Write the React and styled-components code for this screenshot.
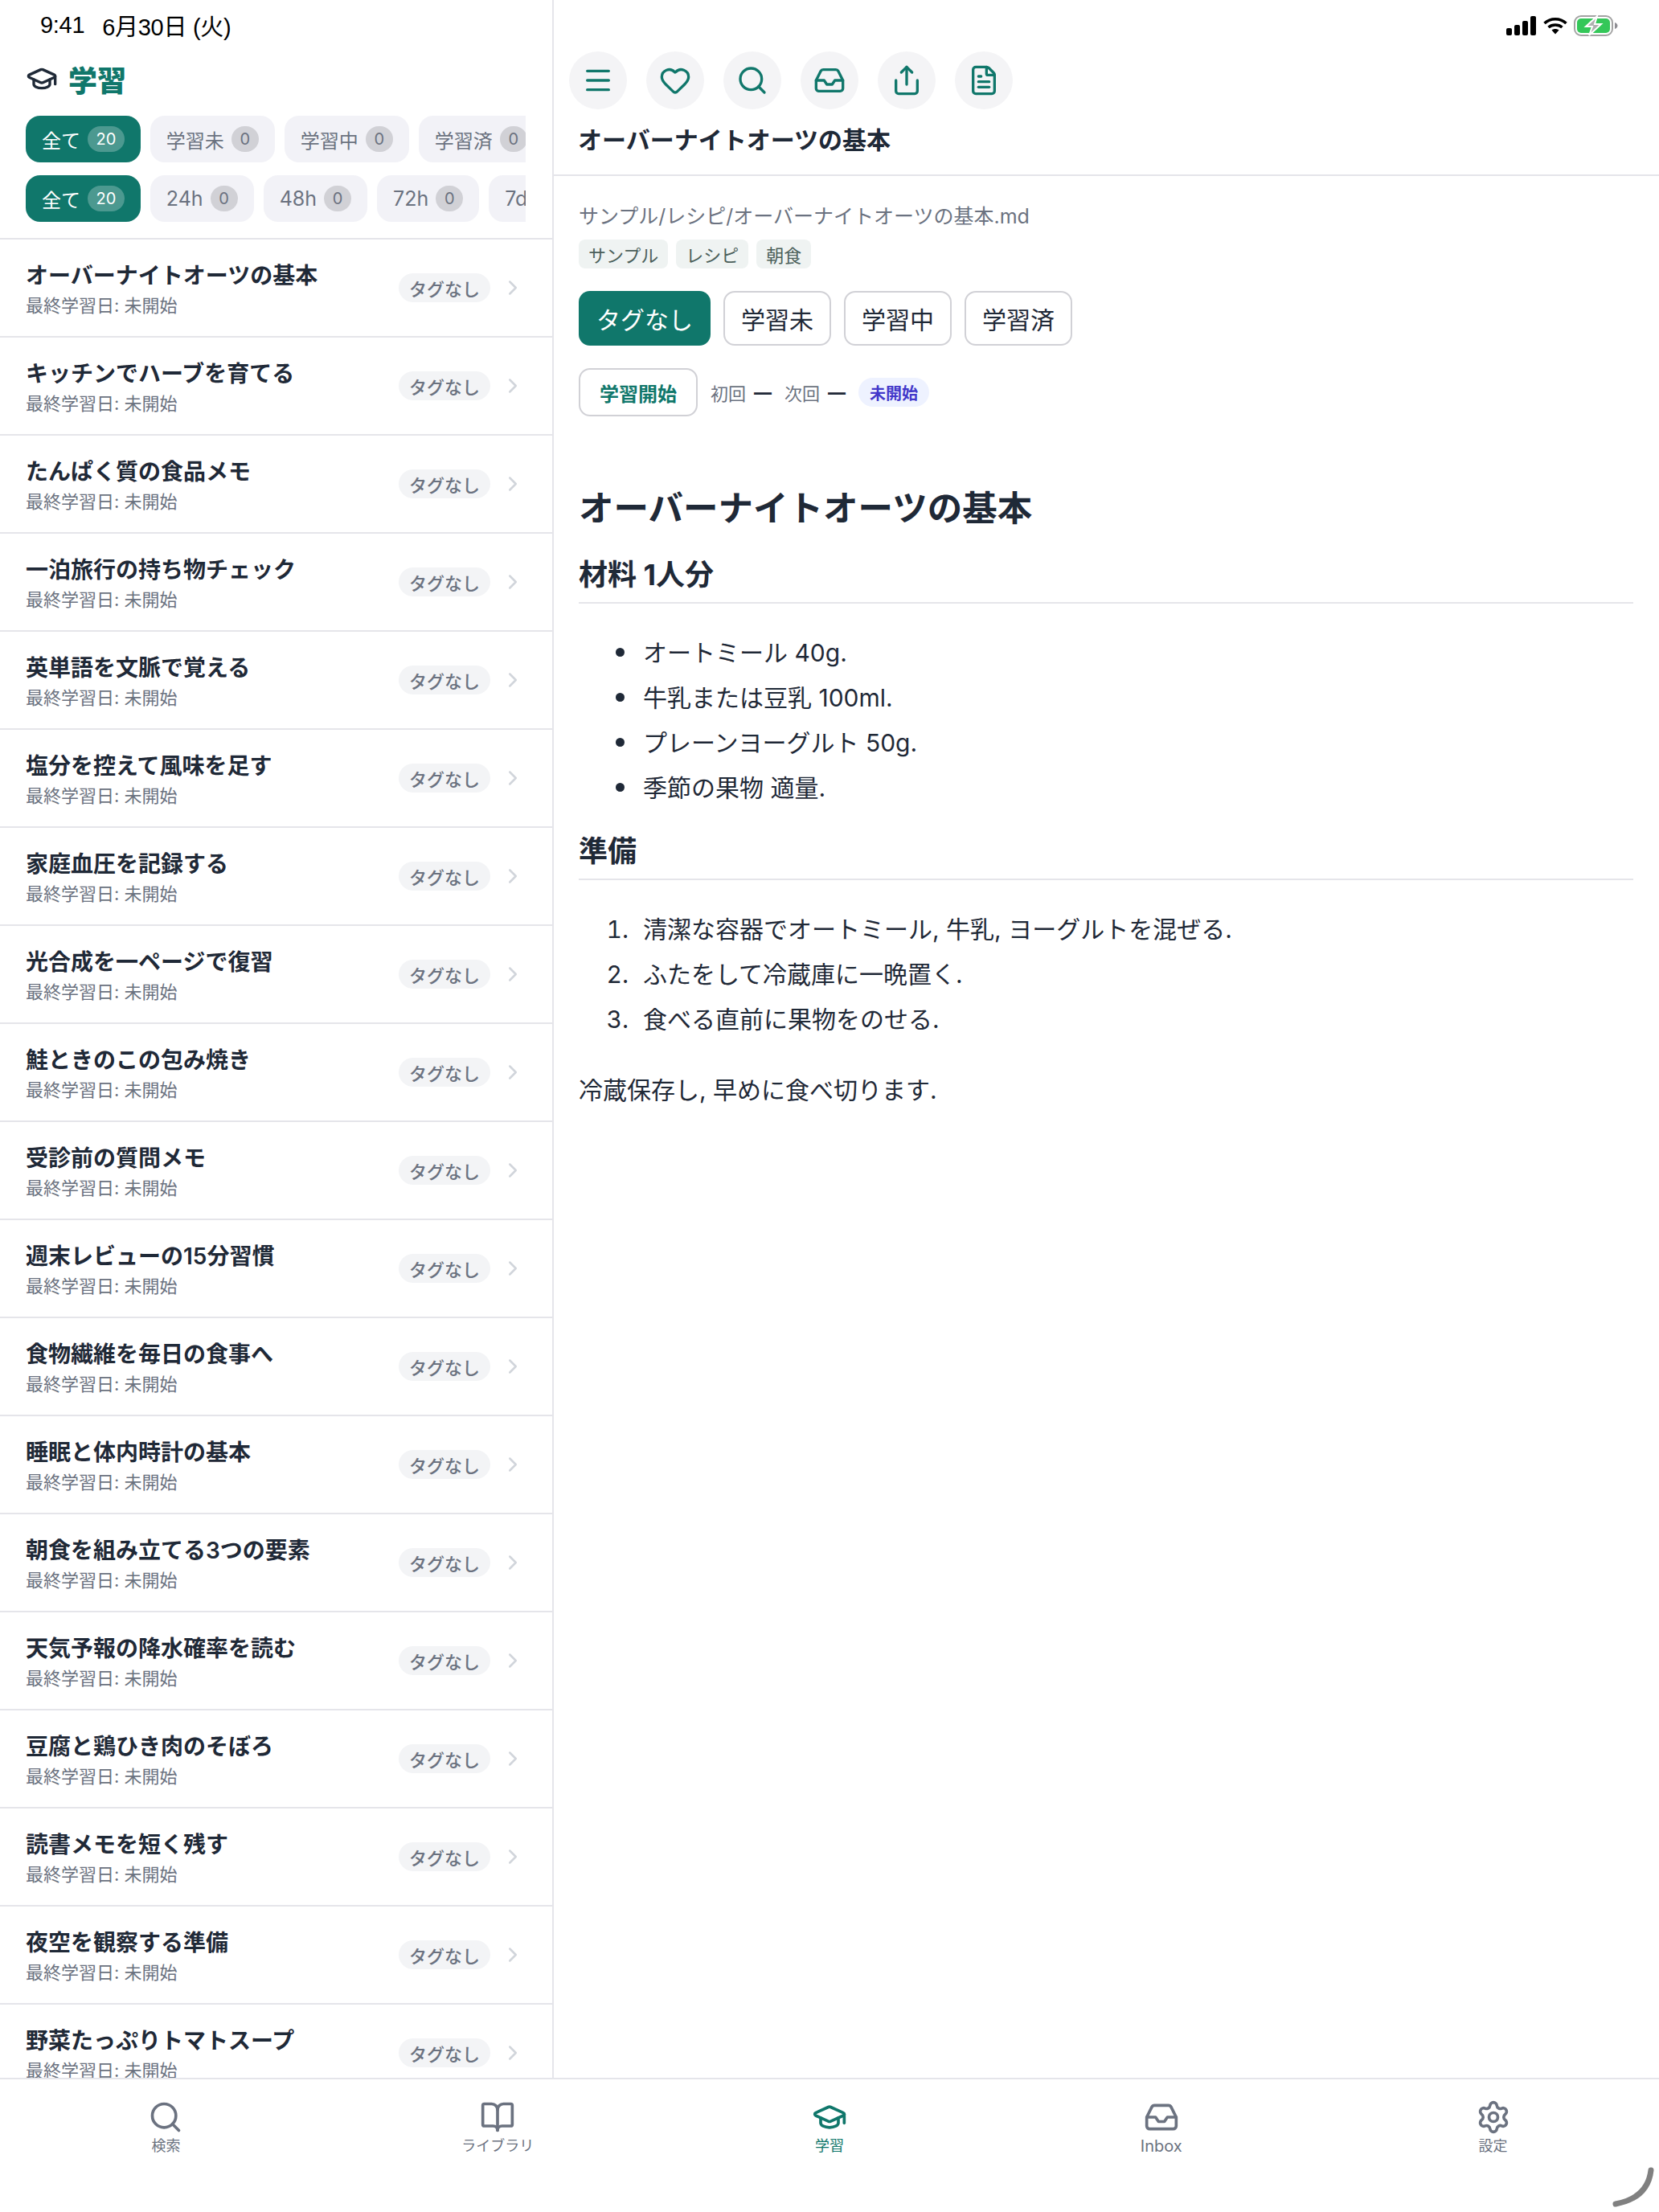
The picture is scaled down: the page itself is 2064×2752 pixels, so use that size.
import styled, { createGlobalStyle } from "styled-components";
import { BookOpen, ChevronRight, FileText, GraduationCap, Heart, Inbox, Menu, Search, Settings, Share } from "lucide-react";

const GlobalStyle = createGlobalStyle`
  html, body {
    margin: 0;
    padding: 0;
    background: #fff;
  }
  * {
    box-sizing: border-box;
  }
  body {
    font-family: Inter, "Noto Sans CJK JP", sans-serif;
    color: #1f2937;
  }
`;

const Page = styled.div`
  position: relative;
  width: 2064px;
  height: 2752px;
  display: flex;
  flex-direction: column;
  overflow: hidden;
`;
const Main = styled.div`
  flex: 1;
  min-height: 0;
  display: flex;
`;
const Sidebar = styled.aside`
  width: 689px;
  display: flex;
  flex-direction: column;
  border-right: 2px solid #e5e5ea;
`;
const StatusTime = styled.div`
  height: 62px;
  padding-left: 50px;
  display: flex;
  align-items: center;
  gap: 22px;
  font-family: "Liberation Sans", "Noto Sans CJK JP", sans-serif;
  font-size: 29px;
  letter-spacing: -0.3px;
  color: #000;
`;
const SideHeader = styled.div`
  height: 72px;
  margin-bottom: 10px;
  padding-left: 32px;
  display: flex;
  align-items: center;
  gap: 13px;
  color: #1f2937;
`;
const SideTitle = styled.h1`
  margin: 0;
  font-size: 36px;
  font-weight: 900;
  color: #10776b;
`;
const FilterRow = styled.div`
  margin: 0 33px 16px 32px;
  display: flex;
  gap: 12px;
  overflow: hidden;
`;
const Chip = styled.div`
  flex-shrink: 0;
  height: 58px;
  padding: 0 20px;
  display: flex;
  align-items: center;
  gap: 9px;
  border-radius: 18px;
  font-size: ${(p) => (p.$latin ? "25px" : "24px")};
  background: ${(p) => (p.$active ? "#10776b" : "#f2f2f7")};
  color: ${(p) => (p.$active ? "#fff" : "#6b7280")};
`;
const ChipCount = styled.span`
  min-width: 34px;
  height: 32px;
  padding: 0 10.5px;
  display: flex;
  align-items: center;
  justify-content: center;
  border-radius: 16px;
  font-size: 20px;
  background: ${(p) => (p.$active ? "rgba(255,255,255,0.25)" : "#d1d1d6")};
  color: ${(p) => (p.$active ? "#fff" : "#6b7280")};
`;
const List = styled.div`
  flex: 1;
  min-height: 0;
  margin-top: 4px;
  overflow: hidden;
  border-top: 2px solid #e5e5ea;
`;
const Row = styled.div`
  height: 122px;
  padding: 0 34px 0 32px;
  display: flex;
  align-items: center;
  border-bottom: 2px solid #e5e5ea;
`;
const RowText = styled.div`
  flex: 1;
  min-width: 0;
  padding-top: 2px;
`;
const RowTitle = styled.div`
  font-size: 28px;
  line-height: 40px;
  font-weight: 600;
  color: #1f2937;
`;
const RowSub = styled.div`
  font-size: 22px;
  line-height: 32px;
  margin-top: 1px;
  color: #6b7280;
`;
const Pill = styled.span`
  width: 114px;
  height: 36px;
  margin-right: 13px;
  display: flex;
  align-items: center;
  justify-content: center;
  border-radius: 18px;
  background: #f3f4f6;
  color: #6b7280;
  font-size: 22px;
  font-weight: 500;
`;
const Chevron = styled(ChevronRight)`
  color: #d1d5db;
`;
const Detail = styled.section`
  flex: 1;
  min-width: 0;
  display: flex;
  flex-direction: column;
`;
const StatusIcons = styled.div`
  height: 64px;
  padding-right: 50px;
  display: flex;
  align-items: center;
  justify-content: flex-end;
  gap: 8px;
`;
const Toolbar = styled.div`
  padding-left: 19px;
  display: flex;
  gap: 24px;
`;
const RoundButton = styled.button`
  width: 72px;
  height: 72px;
  padding: 0;
  border: none;
  border-radius: 50%;
  display: flex;
  align-items: center;
  justify-content: center;
  background: #f4f4f6;
  color: #10776b;
`;
const DocTitle = styled.h2`
  margin: 0;
  height: 83px;
  padding: 16px 0 0 30px;
  font-size: 30px;
  line-height: 44px;
  font-weight: 700;
  color: #1f2937;
  border-bottom: 2px solid #e5e5ea;
`;
const DocBody = styled.div`
  padding: 32px 32px 0 31px;
`;
const PathText = styled.div`
  font-size: 25px;
  line-height: 36px;
  color: #6b7280;
`;
const TagRow = styled.div`
  margin-top: 11px;
  display: flex;
  gap: 10px;
`;
const Tag = styled.span`
  height: 36px;
  padding: 0 12px;
  display: flex;
  align-items: center;
  border-radius: 8px;
  background: #eff3f2;
  color: #4b5f5a;
  font-size: 22px;
`;
const StatusRow = styled.div`
  margin-top: 28px;
  display: flex;
  gap: 16px;
`;
const StatusButton = styled.button`
  height: 68px;
  padding: 0 ${(p) => (p.$active ? "22px" : "20px")};
  border: ${(p) => (p.$active ? "none" : "2px solid #d1d1d6")};
  border-radius: 14px;
  background: ${(p) => (p.$active ? "#10776b" : "#fff")};
  color: ${(p) => (p.$active ? "#fff" : "#1f2937")};
  font-family: inherit;
  font-size: 30px;
`;
const ReviewRow = styled.div`
  margin-top: 28px;
  display: flex;
  align-items: center;
`;
const StartButton = styled.button`
  height: 60px;
  padding: 0 24px;
  margin-right: 16px;
  border: 2px solid #d1d1d6;
  border-radius: 14px;
  background: #fff;
  color: #10776b;
  font-family: inherit;
  font-size: 24px;
  font-weight: 600;
`;
const ReviewLabel = styled.span`
  font-size: 22px;
  color: #6b7280;
`;
const ReviewValue = styled.span`
  margin: 0 16px 0 10px;
  font-size: 22px;
  font-weight: 800;
  color: #1f2937;
`;
const StateBadge = styled.span`
  height: 36px;
  padding: 0 14px;
  display: flex;
  align-items: center;
  border-radius: 18px;
  background: #eef2ff;
  color: #4338ca;
  font-size: 20px;
  font-weight: 600;
`;
const Heading1 = styled.h1`
  margin: 82px 0 0;
  font-size: 43.5px;
  line-height: 64px;
  font-weight: 700;
`;
const Heading2 = styled.h2`
  margin: 26px 0 0;
  padding-bottom: 9px;
  font-size: 36px;
  line-height: 50px;
  font-weight: 700;
  border-bottom: 2px solid #e5e5ea;
`;
const Bullets = styled.ul`
  margin: 33px 0 0;
  padding-left: 80px;
  list-style: none;
  font-size: 30px;
  line-height: 56px;
  li {
    position: relative;
  }
  li::before {
    content: "";
    position: absolute;
    left: -34px;
    top: 22px;
    width: 11px;
    height: 11px;
    border-radius: 50%;
    background: #1f2937;
  }
`;
const Numbers = styled.ol`
  margin: 33px 0 0;
  padding-left: 70px;
  font-size: 30px;
  line-height: 56px;
  li {
    padding-left: 10px;
  }
`;
const Para = styled.p`
  margin: 32px 0 0;
  font-size: 30px;
  line-height: 56px;
`;
const TabBar = styled.nav`
  height: 167px;
  flex-shrink: 0;
  padding-top: 25px;
  display: grid;
  grid-template-columns: repeat(5, 1fr);
  align-items: start;
  border-top: 2px solid #e5e5ea;
`;
const Tab = styled.div`
  display: flex;
  flex-direction: column;
  align-items: center;
  gap: 2px;
  color: ${(p) => (p.$active ? "#10776b" : "#6b7280")};
`;
const TabLabel = styled.span`
  font-size: ${(p) => (p.$latin ? "20px" : "18px")};
  line-height: 24px;
`;
const HomeCurve = styled.svg`
  position: absolute;
  right: 6px;
  bottom: 6px;
`;

const items = [
  "オーバーナイトオーツの基本",
  "キッチンでハーブを育てる",
  "たんぱく質の食品メモ",
  "一泊旅行の持ち物チェック",
  "英単語を文脈で覚える",
  "塩分を控えて風味を足す",
  "家庭血圧を記録する",
  "光合成を一ページで復習",
  "鮭ときのこの包み焼き",
  "受診前の質問メモ",
  "週末レビューの15分習慣",
  "食物繊維を毎日の食事へ",
  "睡眠と体内時計の基本",
  "朝食を組み立てる3つの要素",
  "天気予報の降水確率を読む",
  "豆腐と鶏ひき肉のそぼろ",
  "読書メモを短く残す",
  "夜空を観察する準備",
  "野菜たっぷりトマトスープ",
];

const statusFilters = [["全て", 20], ["学習未", 0], ["学習中", 0], ["学習済", 0]];
const timeFilters = [["全て", 20], ["24h", 0], ["48h", 0], ["72h", 0], ["7d", 0]];
const tabs = [
  ["検索", Search],
  ["ライブラリ", BookOpen],
  ["学習", GraduationCap],
  ["Inbox", Inbox],
  ["設定", Settings],
];

const isLatin = (text) => /^[0-9a-zA-Z]+$/.test(text);

const Filters = ({ list }) => (
  <FilterRow>
    {list.map(([label, count], i) => (
      <Chip key={label} $active={i === 0} $latin={isLatin(label)}>
        {label}
        <ChipCount $active={i === 0}>{count}</ChipCount>
      </Chip>
    ))}
  </FilterRow>
);

const Signal = () => (
  <svg width="38" height="24" viewBox="0 0 38 24">
    <rect x="0" y="15" width="7" height="9" rx="2" fill="#000" />
    <rect x="10" y="11" width="7" height="13" rx="2" fill="#000" />
    <rect x="20" y="6" width="7" height="18" rx="2" fill="#000" />
    <rect x="30" y="0" width="7" height="24" rx="2" fill="#000" />
  </svg>
);

const Wifi = () => (
  <svg width="30" height="22" viewBox="0 0 30 22">
    <path d="M1.5 8 C9 1 21 1 28.5 8" fill="none" stroke="#000" strokeWidth="3.6" />
    <path d="M6.5 13 C11 9 19 9 23.5 13" fill="none" stroke="#000" strokeWidth="3.6" />
    <path d="M10.5 16.5 L15 21.5 L19.5 16.5 C17 14.5 13 14.5 10.5 16.5 Z" fill="#000" />
  </svg>
);

const Battery = () => (
  <svg width="56" height="28" viewBox="0 0 56 28">
    <rect x="1" y="2" width="47" height="24" rx="8" fill="none" stroke="#a3a3a3" strokeWidth="2" />
    <rect x="4" y="5" width="41" height="18" rx="5" fill="#34c759" />
    <path d="M51 10 C53.5 11 54.5 12.5 54.5 14 C54.5 15.5 53.5 17 51 18 Z" fill="#8e8e93" />
    <path d="M29 2 L15 15 H23 L19 26 L34 12 H26 Z" fill="#b0b0b0" stroke="#fff" strokeWidth="2" />
  </svg>
);

const App = () => {
  return (
    <Page>
      <GlobalStyle />
      <Main>
        <Sidebar>
          <StatusTime>
            <span>9:41</span>
            <span>6月30日 (火)</span>
          </StatusTime>
          <SideHeader>
            <GraduationCap size={40} />
            <SideTitle>学習</SideTitle>
          </SideHeader>
          <Filters list={statusFilters} />
          <Filters list={timeFilters} />
          <List>
            {items.map((title) => (
              <Row key={title}>
                <RowText>
                  <RowTitle>{title}</RowTitle>
                  <RowSub>最終学習日: 未開始</RowSub>
                </RowText>
                <Pill>タグなし</Pill>
                <Chevron size={30} />
              </Row>
            ))}
          </List>
        </Sidebar>
        <Detail>
          <StatusIcons>
            <Signal />
            <Wifi />
            <Battery />
          </StatusIcons>
          <Toolbar>
            <RoundButton><Menu size={40} /></RoundButton>
            <RoundButton><Heart size={40} /></RoundButton>
            <RoundButton><Search size={40} /></RoundButton>
            <RoundButton><Inbox size={40} /></RoundButton>
            <RoundButton><Share size={40} /></RoundButton>
            <RoundButton><FileText size={40} /></RoundButton>
          </Toolbar>
          <DocTitle>オーバーナイトオーツの基本</DocTitle>
          <DocBody>
            <PathText>サンプル/レシピ/オーバーナイトオーツの基本.md</PathText>
            <TagRow>
              <Tag>サンプル</Tag>
              <Tag>レシピ</Tag>
              <Tag>朝食</Tag>
            </TagRow>
            <StatusRow>
              <StatusButton $active>タグなし</StatusButton>
              <StatusButton>学習未</StatusButton>
              <StatusButton>学習中</StatusButton>
              <StatusButton>学習済</StatusButton>
            </StatusRow>
            <ReviewRow>
              <StartButton>学習開始</StartButton>
              <ReviewLabel>初回</ReviewLabel>
              <ReviewValue>—</ReviewValue>
              <ReviewLabel>次回</ReviewLabel>
              <ReviewValue>—</ReviewValue>
              <StateBadge>未開始</StateBadge>
            </ReviewRow>
            <Heading1>オーバーナイトオーツの基本</Heading1>
            <Heading2>材料 1人分</Heading2>
            <Bullets>
              <li>オートミール 40g.</li>
              <li>牛乳または豆乳 100ml.</li>
              <li>プレーンヨーグルト 50g.</li>
              <li>季節の果物 適量.</li>
            </Bullets>
            <Heading2>準備</Heading2>
            <Numbers>
              <li>清潔な容器でオートミール, 牛乳, ヨーグルトを混ぜる.</li>
              <li>ふたをして冷蔵庫に一晩置く.</li>
              <li>食べる直前に果物をのせる.</li>
            </Numbers>
            <Para>冷蔵保存し, 早めに食べ切ります.</Para>
          </DocBody>
        </Detail>
      </Main>
      <TabBar>
        {tabs.map(([label, Icon]) => (
          <Tab key={label} $active={label === "学習"}>
            <Icon size={44} />
            <TabLabel $latin={isLatin(label)}>{label}</TabLabel>
          </Tab>
        ))}
      </TabBar>
      <HomeCurve width="52" height="50" viewBox="0 0 52 50">
        <path d="M48 4 C46 22 36 40 4 46" fill="none" stroke="#808080" strokeWidth="7" strokeLinecap="round" />
      </HomeCurve>
    </Page>
  );
};

export default App;
